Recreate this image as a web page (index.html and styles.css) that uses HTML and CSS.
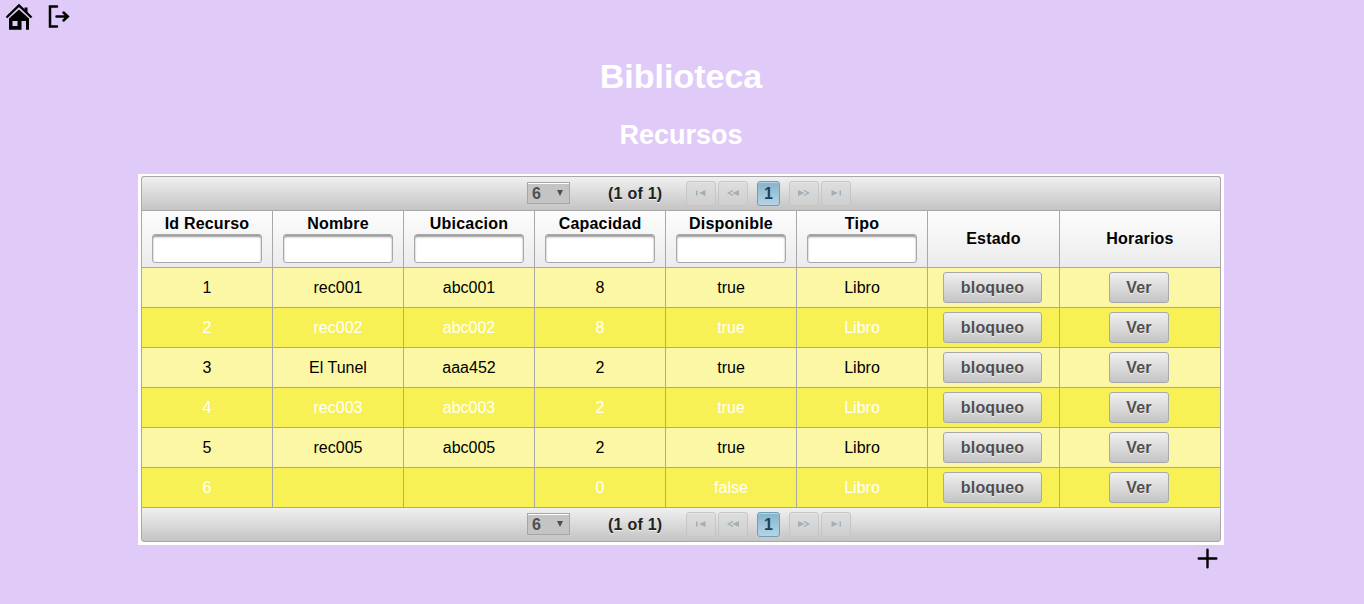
FILE: index.html
```html
<!DOCTYPE html>
<html lang="es">
<head>
<meta charset="utf-8">
<title>Biblioteca</title>
<link rel="stylesheet" href="styles.css">
</head>
<body>
<nav class="toolbar">
  <svg class="home" width="28" height="28" viewBox="0 0 28 28"><path d="M4 15.500L14 6.500l10 9V26.800H21V18h-4.500v8.800H4z"/><path d="M19.500 4.500H22.500v6l-3-3z"/><path d="M1.500 14.500L14 2.500l12.500 12" fill="none" stroke="#000" stroke-width="2.400"/><path class="pane" d="M7.500 18h5v5h-5z"/></svg>
  <svg class="exit" width="24" height="24" viewBox="0 0 24 24"><path d="M10 1.500H3v20h7M9.500 11.500H20.500M16.500 7.500l4.300 4-4.300 4" fill="none" stroke="#000" stroke-width="2.500" stroke-linecap="round"/></svg>
</nav>
<h1 class="title">Biblioteca</h1>
<h2 class="subtitle">Recursos</h2>
<main class="panel">
  <div class="pager">
    <div class="select"><span>6</span><i class="caret"></i></div>
    <span class="count">(1 of 1)</span>
    <div class="pages">
      <span class="nav"><svg width="10" height="6" viewBox="0 0 10 6"><path d="M0 .5h1.500v5H0zM9.500 0v6L3 3z"/></svg></span>
      <span class="nav"><svg width="12" height="6" viewBox="0 0 12 6"><path d="M12 0v6L5.500 3z"/><path d="M6 .5L1.500 3 6 5.500" class="open"/></svg></span>
      <span class="page">1</span>
      <span class="nav"><svg width="12" height="6" viewBox="0 0 12 6"><path d="M0 0v6l6.500-3z"/><path d="M6 .5L10.500 3 6 5.500" class="open"/></svg></span>
      <span class="nav"><svg width="10" height="6" viewBox="0 0 10 6"><path d="M8.500 .5H10v5H8.500zM.5 0v6L7 3z"/></svg></span>
    </div>
  </div>
  <div class="row head">
    <div class="cell"><span>Id Recurso</span><input class="filter"></div>
    <div class="cell"><span>Nombre</span><input class="filter"></div>
    <div class="cell"><span>Ubicacion</span><input class="filter"></div>
    <div class="cell"><span>Capacidad</span><input class="filter"></div>
    <div class="cell"><span>Disponible</span><input class="filter"></div>
    <div class="cell"><span>Tipo</span><input class="filter"></div>
    <div class="cell"><span>Estado</span></div>
    <div class="cell"><span>Horarios</span></div>
  </div>
  <div class="row"><div class="cell">1</div><div class="cell">rec001</div><div class="cell">abc001</div><div class="cell">8</div><div class="cell">true</div><div class="cell">Libro</div><div class="cell"><button class="btn block">bloqueo</button></div><div class="cell"><button class="btn view">Ver</button></div></div>
  <div class="row odd"><div class="cell">2</div><div class="cell">rec002</div><div class="cell">abc002</div><div class="cell">8</div><div class="cell">true</div><div class="cell">Libro</div><div class="cell"><button class="btn block">bloqueo</button></div><div class="cell"><button class="btn view">Ver</button></div></div>
  <div class="row"><div class="cell">3</div><div class="cell">El Tunel</div><div class="cell">aaa452</div><div class="cell">2</div><div class="cell">true</div><div class="cell">Libro</div><div class="cell"><button class="btn block">bloqueo</button></div><div class="cell"><button class="btn view">Ver</button></div></div>
  <div class="row odd"><div class="cell">4</div><div class="cell">rec003</div><div class="cell">abc003</div><div class="cell">2</div><div class="cell">true</div><div class="cell">Libro</div><div class="cell"><button class="btn block">bloqueo</button></div><div class="cell"><button class="btn view">Ver</button></div></div>
  <div class="row"><div class="cell">5</div><div class="cell">rec005</div><div class="cell">abc005</div><div class="cell">2</div><div class="cell">true</div><div class="cell">Libro</div><div class="cell"><button class="btn block">bloqueo</button></div><div class="cell"><button class="btn view">Ver</button></div></div>
  <div class="row odd"><div class="cell">6</div><div class="cell"></div><div class="cell"></div><div class="cell">0</div><div class="cell">false</div><div class="cell">Libro</div><div class="cell"><button class="btn block">bloqueo</button></div><div class="cell"><button class="btn view">Ver</button></div></div>
  <div class="pager bottom">
    <div class="select"><span>6</span><i class="caret"></i></div>
    <span class="count">(1 of 1)</span>
    <div class="pages">
      <span class="nav"><svg width="10" height="6" viewBox="0 0 10 6"><path d="M0 .5h1.500v5H0zM9.500 0v6L3 3z"/></svg></span>
      <span class="nav"><svg width="12" height="6" viewBox="0 0 12 6"><path d="M12 0v6L5.500 3z"/><path d="M6 .5L1.500 3 6 5.500" class="open"/></svg></span>
      <span class="page">1</span>
      <span class="nav"><svg width="12" height="6" viewBox="0 0 12 6"><path d="M0 0v6l6.500-3z"/><path d="M6 .5L10.500 3 6 5.500" class="open"/></svg></span>
      <span class="nav"><svg width="10" height="6" viewBox="0 0 10 6"><path d="M8.500 .5H10v5H8.500zM.5 0v6L7 3z"/></svg></span>
    </div>
  </div>
</main>
<div class="actions">
  <svg width="28" height="28" viewBox="0 0 28 28"><path d="M1.500 7Q2 1.500 7 1h14q5 .5 6 6" fill="none" stroke="#d6cce0" stroke-width="1"/><path d="M14.500 4.800v17.500M5.700 13.500h17.600" fill="none" stroke="#000" stroke-width="2.400" stroke-linecap="round"/></svg>
</div>
</body>
</html>
```

FILE: styles.css
```css
* { box-sizing: border-box; }
body {
  margin: 0;
  height: 604px;
  overflow: hidden;
  background: #e0cbf8;
  font: 16px/18px "Liberation Sans", Arial, sans-serif;
  color: #000;
}
.toolbar { display: flex; height: 34px; padding: 3px 0 0 5px; }
.exit { margin: 2px 0 0 14px; }
.pane { fill: #e0cbf8; }
.title, .subtitle { margin: 0; padding-right: 2px; text-align: center; color: #fff; }
.title { padding-top: 22px; font-size: 34px; line-height: 40px; }
.subtitle { padding-top: 23px; font-size: 27px; line-height: 32px; }
.panel {
  width: 1086px;
  height: 371px;
  margin: 23px 0 0 138px;
  padding: 2px 3px 3px;
  background: #fff;
}
.pager {
  display: flex;
  height: 34px;
  padding: 4px 0 0 385px;
  border: 1px solid #a8a8a8;
  border-bottom: 0;
  border-radius: 3px 3px 0 0;
  background: linear-gradient(#f0f0f0, #c4c4c4);
  font-weight: bold;
  color: #222;
}
.pager.bottom { height: 35px; border-bottom: 1px solid #a8a8a8; border-radius: 0 0 3px 3px; }
.select {
  display: flex;
  justify-content: space-between;
  align-items: center;
  width: 43px;
  height: 22px;
  margin-top: 1px;
  padding: 1px 6px 0 4px;
  border: 1px solid #a6a6a6;
  background: #c4c4c4;
  box-shadow: inset 0 1px 0 #fff;
  color: #4f4f4f;
}
.caret { margin-top: -1px; border: 3.5px solid transparent; border-top: 6px solid #4f4f4f; border-bottom: 0; }
.count { width: 54px; margin: 4px 0 0 38px; white-space: nowrap; letter-spacing: .25px; text-shadow: 0 1px 0 rgba(255,255,255,.7); }
.pages { display: flex; margin-left: 24px; gap: 2px; }
.nav, .page { display: flex; justify-content: center; height: 25px; border-radius: 3px; }
.nav {
  width: 30px;
  padding-top: 8px;
  border: 1px solid #c6c6c6;
  background: linear-gradient(#dedede, #cfcfcf);
  box-shadow: inset 0 1px 0 #e4e4e4;
}
.nav path { fill: #a0afb8; }
.nav .open { fill: none; stroke: #a0afb8; stroke-width: 1.4; }
.page {
  width: 23px;
  margin: 0 7px;
  padding-top: 3px;
  border: 1px solid #6d9fb9;
  background: linear-gradient(#86b3cc, #b5d4e5);
  box-shadow: inset 0 1px 0 #b7d5e5;
  color: #1c4257;
}
.row {
  display: grid;
  grid-template-columns: repeat(6, 131px) 132px 162px;
  height: 40px;
  background: #fcf7a5;
}
.row.odd { background: #f8f156; color: #fff; }
.cell {
  display: flex;
  flex-direction: column;
  align-items: center;
  justify-content: center;
  border-top: 1px solid #a8a8a8;
  border-left: 1px solid #a8a8a8;
}
.cell:nth-child(7), .cell:nth-child(8) { padding-right: 2px; }
.head .cell:nth-child(7), .head .cell:nth-child(8) { padding-right: 0; }
.cell:last-child { border-right: 1px solid #a8a8a8; }
.row.head { height: 57px; background: linear-gradient(#fdfdfd, #ebebeb); font-weight: bold; letter-spacing: .2px; }
.filter {
  width: 110px;
  height: 29px;
  margin-top: 1px;
  border: 1px solid #a8a8a8;
  border-radius: 3px;
  background: #fff;
  box-shadow: inset 0 2px 2px #999;
}
.btn {
  height: 31px;
  padding: 0;
  border: 1px solid #a8a8a8;
  border-radius: 3px;
  background: linear-gradient(#f0f0f0, #c4c4c4);
  font: bold 16px/18px "Liberation Sans", Arial, sans-serif;
  color: #4f4f4f;
  letter-spacing: .15px;
  text-shadow: 0 1px 0 rgba(255,255,255,.7);
}
.block { width: 99px; }
.view { width: 60px; }
.actions { display: flex; justify-content: flex-end; padding-right: 143px; }
```
